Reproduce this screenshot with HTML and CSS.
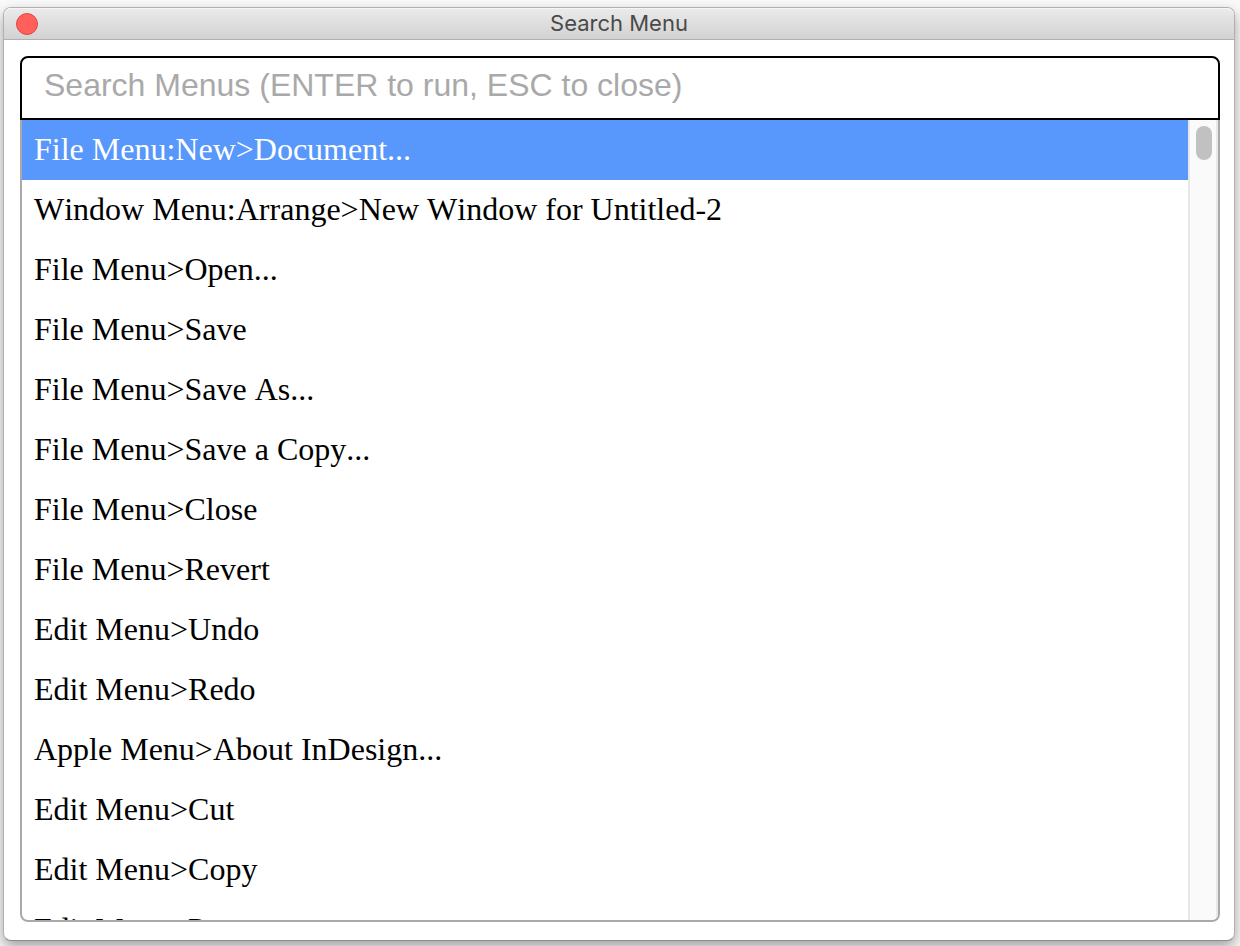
FILE: index.html
```html
<!DOCTYPE html>
<html lang="en">
<head>
<meta charset="utf-8">
<meta name="viewport" content="width=device-width, initial-scale=1">
<title>Search Menu</title>
<link rel="stylesheet" href="styles.css">
</head>
<body>
<main class="window">
  <header class="titlebar">
    <button class="close" type="button" aria-label="Close"></button>
    <h1 class="title">Search Menu</h1>
  </header>
  <div class="content">
    <input class="search" type="text" aria-label="Search menus" placeholder="Search Menus (ENTER to run, ESC to close)">
    <div class="results">
      <ul class="list" role="listbox" aria-label="Menu commands">
        <li class="item selected" role="option" aria-selected="true">File Menu:New&gt;Document...</li>
        <li class="item" role="option">Window Menu:Arrange&gt;New Window for Untitled-2</li>
        <li class="item" role="option">File Menu&gt;Open...</li>
        <li class="item" role="option">File Menu&gt;Save</li>
        <li class="item" role="option">File Menu&gt;Save As...</li>
        <li class="item" role="option">File Menu&gt;Save a Copy...</li>
        <li class="item" role="option">File Menu&gt;Close</li>
        <li class="item" role="option">File Menu&gt;Revert</li>
        <li class="item" role="option">Edit Menu&gt;Undo</li>
        <li class="item" role="option">Edit Menu&gt;Redo</li>
        <li class="item" role="option">Apple Menu&gt;About InDesign...</li>
        <li class="item" role="option">Edit Menu&gt;Cut</li>
        <li class="item" role="option">Edit Menu&gt;Copy</li>
        <li class="item" role="option">Edit Menu&gt;Paste</li>
      </ul>
      <div class="track"><div class="thumb"></div></div>
    </div>
  </div>
</main>
</body>
</html>
```
FILE: styles.css
```css
* {
  box-sizing: border-box;
}

body {
  margin: 0;
  height: 100vh;
  padding: 7px 5px 5px 3px;
  background: #fafafa;
  overflow: hidden;
}

.window {
  display: flex;
  flex-direction: column;
  height: 100%;
  background: #fff;
  border: 1px solid #b0b0b0;
  border-bottom-color: #8c8c8c;
  border-radius: 8px;
  box-shadow: 0 6px 14px rgba(0, 0, 0, 0.36);
}

.titlebar {
  display: grid;
  grid-template-columns: 1fr auto 1fr;
  align-items: center;
  flex: none;
  height: 32px;
  padding: 0 12px;
  background: linear-gradient(#ebebeb, #d2d2d2);
  border-bottom: 1px solid #b1b1b1;
  border-radius: 7px 7px 0 0;
  box-shadow: inset 0 1px #f5f5f5;
}

.close {
  width: 22px;
  height: 22px;
  padding: 0;
  background: #ff605c;
  border: 1px solid #e2463f;
  border-radius: 50%;
}

.title {
  margin: 0;
  font: 400 22px/31px Inter, sans-serif;
  color: #4a4a4a;
}

.content {
  display: flex;
  flex-direction: column;
  flex: 1;
  min-height: 0;
  padding: 16px 14px 18px 16px;
}

.search {
  flex: none;
  width: 100%;
  height: 64px;
  padding: 0 22px 6px;
  background: #fff;
  border: 2px solid #000;
  border-radius: 8px 8px 0 0;
  outline: none;
  font: 32px "Liberation Sans", Arial, sans-serif;
  color: #000;
}

.search::placeholder {
  color: #a9a9a9;
  opacity: 1;
}

.results {
  display: flex;
  flex: 1;
  min-height: 0;
  border: 2px solid #a9a9a9;
  border-top: 0;
  border-radius: 0 0 8px 8px;
  overflow: hidden;
}

.list {
  flex: 1;
  margin: 0;
  padding: 0;
  list-style: none;
  overflow: hidden;
}

.item {
  height: 60px;
  padding: 0 12px;
  font: 32px/58px "Liberation Serif", "Times New Roman", serif;
  font-kerning: none;
  color: #000;
  white-space: nowrap;
}

.selected {
  background: #5897fb;
  color: #fff;
}

.track {
  flex: none;
  width: 30px;
  padding: 6px;
  background: #fafafa;
  border: solid #e8e8e8;
  border-width: 0 2px;
}

.thumb {
  width: 16px;
  height: 34px;
  background: #c1c1c1;
  border-radius: 8px;
}
```
